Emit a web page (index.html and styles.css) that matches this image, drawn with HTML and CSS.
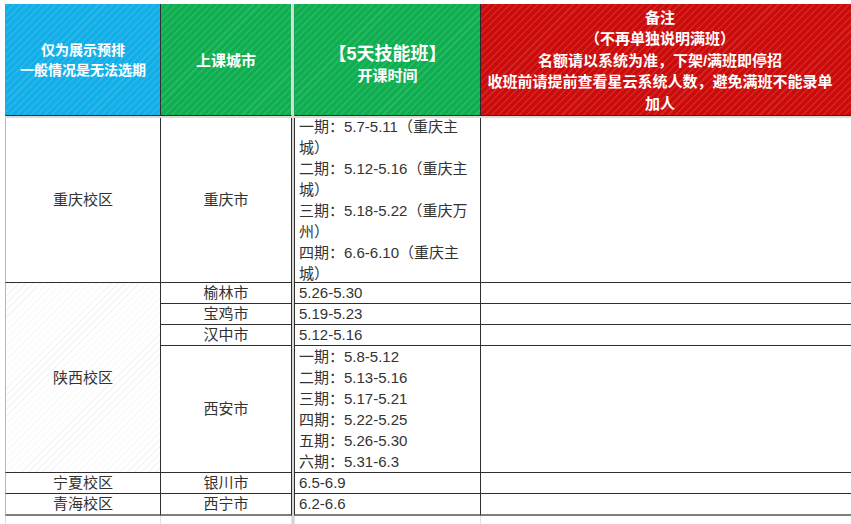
FILE: index.html
```html
<!DOCTYPE html>
<html lang="zh-CN">
<head>
<meta charset="utf-8">
<title>开课时间表</title>
<link rel="stylesheet" href="styles.css">
</head>
<body>
<div class="sheet">
<table class="grid">
  <colgroup>
    <col class="w1"><col class="w2"><col class="wp"><col class="w3"><col class="w4">
  </colgroup>
  <tr class="head">
    <td class="h h-blue"><div class="hin"><div>仅为展示预排</div><div>一般情况是无法选期</div></div></td>
    <td class="h h-green2"><div class="hin">上课城市</div></td>
    <td class="pane" rowspan="10"></td>
    <td class="h h-green3"><div class="hin shift"><div class="big">【5天技能班】</div><div>开课时间</div></div></td>
    <td class="h h-red"><div class="hin note">
      <div>备注</div>
      <div>（不再单独说明满班）</div>
      <div>名额请以系统为准，下架/满班即停招</div>
      <div>收班前请提前查看星云系统人数，避免满班不能录单加人</div>
    </div></td>
  </tr>
  <tr class="gap"><td colspan="2"></td><td colspan="2"></td></tr>
  <tr>
    <td class="c1">重庆校区</td>
    <td>重庆市</td>
    <td class="c3"><div class="multi tall">
      <div>一期：5.7-5.11（重庆主城）</div>
      <div>二期：5.12-5.16（重庆主城）</div>
      <div>三期：5.18-5.22（重庆万州）</div>
      <div>四期：6.6-6.10（重庆主城）</div>
    </div></td>
    <td class="c4"></td>
  </tr>
  <tr>
    <td class="c1 hatch" rowspan="4">陕西校区</td>
    <td>榆林市</td>
    <td class="c3">5.26-5.30</td>
    <td class="c4"></td>
  </tr>
  <tr>
    <td>宝鸡市</td>
    <td class="c3">5.19-5.23</td>
    <td class="c4"></td>
  </tr>
  <tr>
    <td>汉中市</td>
    <td class="c3">5.12-5.16</td>
    <td class="c4"></td>
  </tr>
  <tr>
    <td>西安市</td>
    <td class="c3"><div class="multi mid">
      <div>一期：5.8-5.12</div>
      <div>二期：5.13-5.16</div>
      <div>三期：5.17-5.21</div>
      <div>四期：5.22-5.25</div>
      <div>五期：5.26-5.30</div>
      <div>六期：5.31-6.3</div>
    </div></td>
    <td class="c4"></td>
  </tr>
  <tr>
    <td class="c1">宁夏校区</td>
    <td>银川市</td>
    <td class="c3">6.5-6.9</td>
    <td class="c4"></td>
  </tr>
  <tr class="last">
    <td class="c1">青海校区</td>
    <td>西宁市</td>
    <td class="c3">6.2-6.6</td>
    <td class="c4"></td>
  </tr>
  <tr class="filler">
    <td class="c1"></td>
    <td></td>
    <td class="c3"></td>
    <td class="c4"></td>
  </tr>
</table>
</div>
</body>
</html>
```

FILE: styles.css
```css
html, body {
  margin: 0;
  padding: 0;
  background: #ffffff;
  overflow: hidden;
}

body {
  font-family: "Liberation Sans", "Noto Sans CJK SC", sans-serif;
}

.sheet {
  padding: 4px 0 0 5px;
}

.grid {
  border-collapse: separate;
  border-spacing: 0;
  table-layout: fixed;
  width: 876px;
}

.w1 { width: 156px; }
.w2 { width: 131px; }
.wp { width: 2px; }
.w3 { width: 187px; }
.w4 { width: 400px; }

.grid td {
  padding: 0;
  font-size: 15px;
  line-height: 20px;
  color: #333333;
  text-align: center;
  vertical-align: middle;
  border-right: 1px solid #2e2e2e;
  border-bottom: 1px solid #2e2e2e;
  overflow: hidden;
}

.grid td.c1 {
  border-left: 1px solid #b8b8b8;
}

.grid td.c3 {
  border-left: 1px solid #2e2e2e;
  text-align: left;
  padding-left: 4px;
}

.grid td.c4 {
  border-right: none;
}

.grid td.pane {
  background: #d6d6d6;
  border: none;
}

.hatch {
  background: repeating-linear-gradient(135deg, rgba(0, 0, 0, 0) 0 4px, rgba(0, 0, 0, 0.035) 4px 5px);
}

/* header */
.grid td.h {
  color: #ffffff;
  font-weight: bold;
  border-bottom: 1px solid #2a2a2a;
  background-image: repeating-linear-gradient(135deg, rgba(255, 255, 255, 0.11) 0 1.5px, rgba(255, 255, 255, 0) 1.5px 5px);
}

.hin {
  height: 111px;
  display: flex;
  flex-direction: column;
  justify-content: center;
  align-items: center;
  font-size: 14px;
  line-height: 20px;
}

.h-blue {
  background-color: #12aee8;
  border-left: 1px solid #12aee8;
}

.grid td.h-green2 {
  background-color: #0fae50;
  border-right: 1px solid #e2e2e2;
}
.h-green2 .hin {
  font-size: 15px;
  padding-top: 3px;
  box-sizing: border-box;
}

.grid td.h-green3 {
  background-color: #0fae50;
  border-left: 1px solid #0fae50;
  border-right: 1px solid #2a2a2a;
}

.shift {
  box-sizing: border-box;
  padding-top: 8px;
}
.shift .big {
  font-size: 18px;
  line-height: 24px;
}
.shift div + div {
  font-size: 15px;
}

.grid td.h-red {
  background-color: #cc0b0b;
  border-right: none;
}

.note {
  width: 358px;
  font-size: 15px;
  line-height: 21.6px;
  text-align: center;
  box-sizing: border-box;
  padding-top: 2px;
}

/* frozen-pane gap under header */
.grid tr.gap td {
  height: 2px;
  padding: 0;
  font-size: 0;
  line-height: 0;
  border: none;
  background: #dadada;
}

/* multi-line date cells */
.multi {
  display: flex;
  flex-direction: column;
  justify-content: center;
  line-height: 21px;
  overflow: hidden;
  white-space: normal;
}
.multi.tall { height: 164px; }
.multi.mid { height: 126px; }

.grid tr.last td {
  border-bottom: 2px solid #7e7e7e;
}

.grid tr.filler td {
  height: 10px;
  line-height: 0;
  font-size: 0;
  border-bottom: none;
  border-right: 1px solid #e0e0e0;
}
.grid tr.filler td.c1 { border-left: 1px solid #e0e0e0; }
.grid tr.filler td.c3 { border-left: 1px solid #e0e0e0; }
.grid tr.filler td.c4 { border-right: none; }
```
